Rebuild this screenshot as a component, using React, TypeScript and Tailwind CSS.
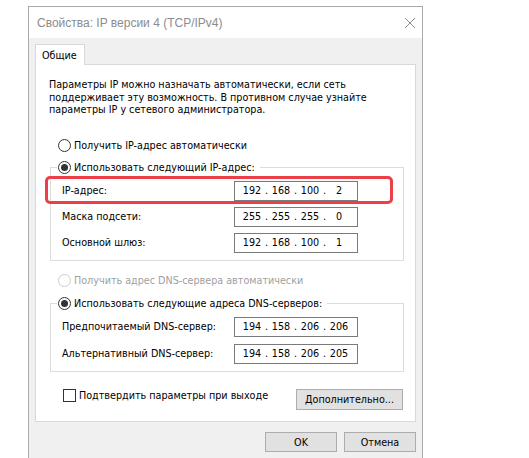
import React from "react";

const bodyFont = { fontFamily: '"DejaVu Sans Condensed", "DejaVu Sans", sans-serif' };
const titleFont = { fontFamily: '"Liberation Sans", "Noto Sans", sans-serif' };

type RadioProps = { checked?: boolean; disabled?: boolean };

const Radio = ({ checked, disabled }: RadioProps) => (
  <span
    className={`w-[13px] h-[13px] shrink-0 rounded-full border bg-white flex items-center justify-center ${
      disabled ? "border-[#cccccc]" : "border-[#333333]"
    }`}
  >
    {checked && <span className="w-[7px] h-[7px] rounded-full bg-[#333333]" />}
  </span>
);

const RadioRow = ({
  label,
  checked,
  disabled,
}: RadioProps & { label: string }) => (
  <div className="flex items-center h-[16px]">
    <Radio checked={checked} disabled={disabled} />
    <span className={`ml-[3px] ${disabled ? "text-[#a0a0a0]" : "text-black"}`}>
      {label}
    </span>
  </div>
);

// four octets, each centered in its own cell, dots between
const IpBox = ({ value }: { value: string }) => {
  const parts = value.split(".");
  return (
    <div className="w-[124px] h-[20px] border border-[#7a7a7a] bg-white flex items-center pl-[6px] text-black">
      {parts.map((p, i) => (
        <React.Fragment key={i}>
          <span className="w-[22px] text-center">{p}</span>
          {i < parts.length - 1 && <span className="w-[7px] text-center">.</span>}
        </React.Fragment>
      ))}
    </div>
  );
};

const FieldRow = ({
  label,
  value,
  highlight,
}: {
  label: string;
  value: string;
  highlight?: boolean;
}) => (
  <div className="relative flex items-center h-[20px] pl-[11px]">
    <span className="w-[172px]">{label}</span>
    <IpBox value={value} />
    {highlight && (
      <div className="absolute -left-[6px] right-[10px] -top-[5px] -bottom-[3px] border-[3px] border-[#ec3f47] rounded-[5px]" />
    )}
  </div>
);

const GroupBox = ({
  legend,
  gap,
  children,
}: {
  legend: React.ReactNode;
  gap: string;
  children: React.ReactNode;
}) => (
  <fieldset className="border border-[#dcdcdc] ml-[14px] mr-[11px] p-0 min-w-0">
    <legend className="ml-[6px] pl-[1px] pr-[5px]">{legend}</legend>
    <div className={`flex flex-col ${gap} pt-[5px] pb-[7px]`}>{children}</div>
  </fieldset>
);

const Button = ({ label, className }: { label: string; className: string }) => (
  <div
    className={`h-[20px] bg-[#e1e1e1] border border-[#adadad] flex items-center justify-center text-black ${className}`}
  >
    {label}
  </div>
);

export default function App() {
  return (
    <div
      className="w-[529px] h-[458px] bg-white overflow-hidden text-[10.7px] leading-[13px]"
      style={bodyFont}
    >
      <div className="ml-[28px] mt-[6px] w-[395px] h-[470px] border border-[#aaaaaa] flex flex-col">
        {/* title bar */}
        <div className="h-[31px] bg-white flex items-center justify-between pl-[8px] pr-[6px] pt-[1px]">
          <span className="text-[#8c8c8c] text-[12px]" style={titleFont}>
            Свойства: IP версии 4 (TCP/IPv4)
          </span>
          <svg width="12" height="12" viewBox="0 0 12 12">
            <path d="M1 1 L11 11 M11 1 L1 11" stroke="#8c8c8c" strokeWidth="1" />
          </svg>
        </div>

        <div className="flex-1 bg-[#f0f0f0] px-[6px] pt-[6px]">
          {/* tab */}
          <div className="flex">
            <div className="w-[50px] h-[21px] bg-white border border-b-0 border-[#d9d9d9] flex items-center pl-[6px] -mb-[1px] relative text-black">
              Общие
            </div>
          </div>

          {/* tab panel */}
          <div className="h-[358px] bg-white border border-[#d9d9d9] flex flex-col">
            <p className="pl-[13px] pt-[14px] text-black leading-[12.5px]">
              Параметры IP можно назначать автоматически, если сеть
              <br />
              поддерживает эту возможность. В противном случае узнайте
              <br />
              параметры IP у сетевого администратора.
            </p>

            <div className="pl-[22px] mt-[21px]">
              <RadioRow label="Получить IP-адрес автоматически" />
            </div>

            <div className="mt-[6px]">
              <GroupBox legend={<RadioRow label="Использовать следующий IP-адрес:" checked />} gap="gap-[6px]">
                <FieldRow label="IP-адрес:" value="192.168.100.2" highlight />
                <FieldRow label="Маска подсети:" value="255.255.255.0" />
                <FieldRow label="Основной шлюз:" value="192.168.100.1" />
              </GroupBox>
            </div>

            <div className="pl-[22px] mt-[12px]">
              <RadioRow label="Получить адрес DNS-сервера автоматически" disabled />
            </div>

            <div className="mt-[7px]">
              <GroupBox
                legend={<RadioRow label="Использовать следующие адреса DNS-серверов:" checked />}
                gap="gap-[7px]"
              >
                <FieldRow label="Предпочитаемый DNS-сервер:" value="194.158.206.206" />
                <FieldRow label="Альтернативный DNS-сервер:" value="194.158.206.205" />
              </GroupBox>
            </div>

            <div className="flex items-start mt-[17px] pl-[27px] pr-[12px]">
              <div className="flex items-center h-[13px]">
                <span className="w-[13px] h-[13px] border border-[#333333] bg-white shrink-0" />
                <span className="ml-[3px] text-black">Подтвердить параметры при выходе</span>
              </div>
              <Button label="Дополнительно..." className="ml-auto w-[107px] h-[21px]" />
            </div>
          </div>

          {/* dialog buttons */}
          <div className="flex justify-end gap-[7px] mt-[10px]">
            <Button label="OK" className="w-[72px]" />
            <Button label="Отмена" className="w-[72px]" />
          </div>
        </div>
      </div>
    </div>
  );
}
